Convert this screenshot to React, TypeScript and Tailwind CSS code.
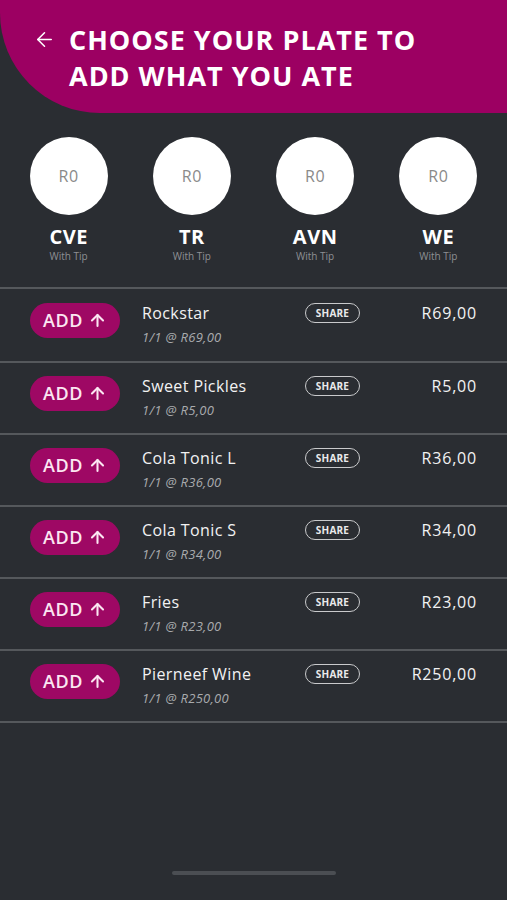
import React from "react";
import { ArrowLeft, ArrowUp } from "lucide-react";

const people = ["CVE", "TR", "AVN", "WE"];
const items = [
  { name: "Rockstar", price: "R69,00" },
  { name: "Sweet Pickles", price: "R5,00" },
  { name: "Cola Tonic L", price: "R36,00" },
  { name: "Cola Tonic S", price: "R34,00" },
  { name: "Fries", price: "R23,00" },
  { name: "Pierneef Wine", price: "R250,00" },
];

export default function App() {
  return (
    <div
      className="h-[900px] w-full bg-[#2a2d32] flex flex-col overflow-hidden"
      style={{ fontFamily: "'Open Sans', 'Liberation Sans', sans-serif" }}
    >
      <div className="h-[113px] bg-[#9c0062] rounded-bl-[100px] flex items-start pl-[33px] pt-[22px]">
        <ArrowLeft size={23} strokeWidth={1.6} className="text-white mt-[6px]" />
        <h1 className="ml-[13px] text-white font-bold text-[27px] leading-[36px] tracking-[1px]">
          CHOOSE YOUR PLATE TO
          <br />
          ADD WHAT YOU ATE
        </h1>
      </div>

      <div className="grid grid-cols-4 px-[7px] pt-[24px]">
        {people.map((p) => (
          <div key={p} className="flex flex-col items-center">
            <div className="w-[78px] h-[78px] rounded-full bg-white flex items-center justify-center text-[16px] text-[#8a8a8a] tracking-[0.5px]">
              R0
            </div>
            <div className="mt-[9px] text-white font-bold text-[20px] leading-[26px] tracking-[0.5px]">{p}</div>
            <div className="text-[10px] leading-[12px] text-[#8e9094]">With Tip</div>
          </div>
        ))}
      </div>

      <div className="mt-[25px] border-b-[2px] border-[#55585c]">
        {items.map((it, i) => (
          <div
            key={it.name}
            className={`${i === 0 ? "h-[74px] pt-[14px]" : "h-[72px] pt-[13px]"} border-t-[2px] border-[#55585c] flex items-start pl-[30px] pr-[30px]`}
          >
            <button className="w-[90px] h-[35px] rounded-full bg-[#9e0864] flex items-center justify-center gap-[5px] text-[#fbe6f1] text-[18px] font-semibold tracking-[0.5px]">
              ADD
              <ArrowUp size={19} strokeWidth={2.6} />
            </button>
            <div className="ml-[22px] w-[163px] flex flex-col">
              <div className="text-[16px] leading-[20px] text-[#f2f2f2] tracking-[0.4px]">{it.name}</div>
              <div className="mt-[4px] text-[13px] leading-[20px] italic text-[#a9abae] tracking-[0.3px]">
                1/1 @ {it.price}
              </div>
            </div>
            <div className="w-[55px] h-[20px] rounded-full border-[1.5px] border-[#c9cacc] flex items-center justify-center text-[10px] font-bold text-[#e9e9ea] tracking-[0.2px]">
              SHARE
            </div>
            <div className="flex-1 text-right text-[16px] leading-[20px] text-[#f2f2f2] tracking-[0.8px]">{it.price}</div>
          </div>
        ))}
      </div>

      <div className="mt-auto mb-[25px] mx-auto w-[164px] h-[4px] rounded-full bg-[#4b4e53]" />
    </div>
  );
}
